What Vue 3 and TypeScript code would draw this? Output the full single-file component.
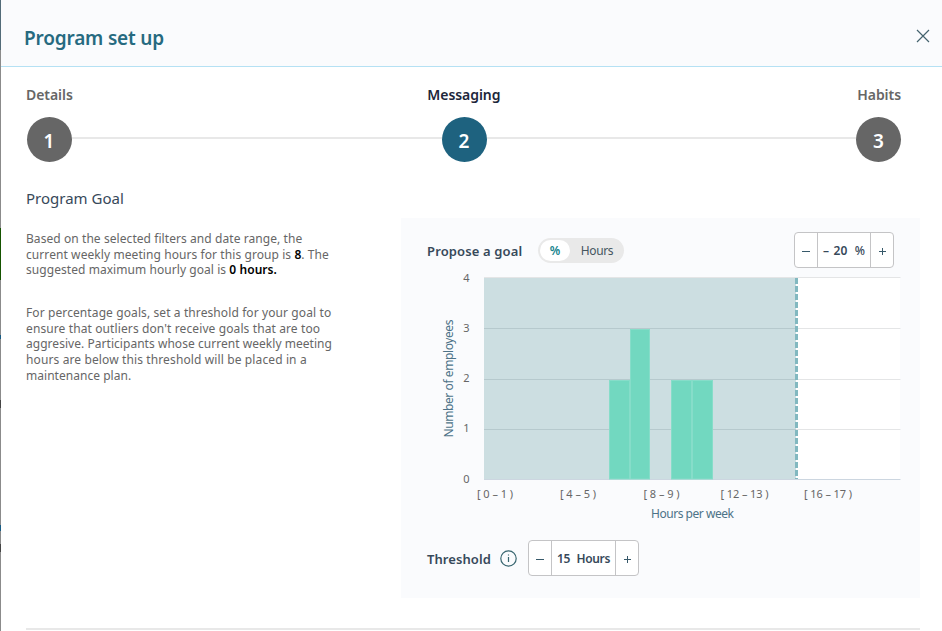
<script setup lang="ts">
import { ref } from 'vue'

interface Step { label: string; state: string }
const steps: Step[] = [
  { label: 'Details', state: 'idle first' },
  { label: 'Messaging', state: 'active' },
  { label: 'Habits', state: 'idle last' },
]

const goal = ref(20)
const threshold = ref(15)

const plot = { left: 83, width: 416 }
const binWidth = plot.width / 20
const grid = [
  { value: 4, y: 6.5, textY: 11 },
  { value: 3, y: 57.5, textY: 61 },
  { value: 2, y: 108.5, textY: 111 },
  { value: 1, y: 158.5, textY: 161 },
  { value: 0, y: 208.5, textY: 212 },
]
const bars = [
  { bin: 6, count: 2 },
  { bin: 7, count: 3 },
  { bin: 9, count: 2 },
  { bin: 10, count: 2 },
]
const ticks = [
  { x: 94, text: '[ 0 – 1 )', width: 36 },
  { x: 177, text: '[ 4 – 5 )', width: 36 },
  { x: 260.5, text: '[ 8 – 9 )', width: 36 },
  { x: 343.5, text: '[ 12 – 13 )', width: 48 },
  { x: 427, text: '[ 16 – 17 )', width: 48 },
]
const binEdge = (bin: number): number => plot.left + Math.round(bin * binWidth)
const barTop = (count: number): number => grid[4 - count].y + 0.5
</script>

<template>
  <div class="screen">
    <div class="backdrop">
      <i class="mark head"></i><i class="mark green"></i><i class="mark blue"></i><i class="mark dark"></i><i class="mark blue low"></i><i class="mark dark low"></i>
    </div>
    <section class="modal">
      <header class="header">
        <h1>Program set up</h1>
        <svg class="close" width="14" height="14" viewBox="0 0 14 14"><path d="M1 1 13 13M13 1 1 13" /></svg>
      </header>

      <div class="steps">
        <div v-for="(step, i) in steps" :key="step.label" class="step" :class="step.state">
          <span class="step-label">{{ step.label }}</span>
          <span class="dot">{{ i + 1 }}</span>
        </div>
      </div>

      <main class="content">
        <div class="copy">
          <h2>Program Goal</h2>
          <p class="intro">
            <span class="l1">Based on the selected filters and date range, the</span>
            <span class="l2">current weekly meeting hours for this group is <b>8</b>. The</span>
            <span class="l3">suggested maximum hourly goal is <b>0 hours.</b></span>
          </p>
          <p class="detail">
            <span class="l4">For percentage goals, set a threshold for your goal to</span>
            <span class="l5">ensure that outliers don't receive goals that are too</span>
            <span class="l6">aggresive. Participants whose current weekly meeting</span>
            <span class="l7">hours are below this threshold will be placed in a</span>
            <span class="l8">maintenance plan.</span>
          </p>
        </div>

        <div class="panel">
          <div class="goal-row">
            <span class="row-label propose">Propose a goal</span>
            <div class="toggle">
              <span class="option on">%</span>
              <span class="option hours">Hours</span>
            </div>
            <div class="stepper goal">
              <button @click="goal--"><svg width="8" height="7"><path d="M0 3.5H8" /></svg></button>
              <div class="value"><span class="amount">– {{ goal }}</span><span class="unit">%</span></div>
              <button class="plus" @click="goal++"><svg width="7" height="7"><path d="M0 3.5H7M3.5 0V7" /></svg></button>
            </div>
          </div>

          <svg class="chart" width="519" height="252" viewBox="0 0 519 252">
            <rect class="plot" :x="plot.left" y="6" :width="plot.width" height="203" />
            <g v-for="line in grid" :key="line.value">
              <line :class="line.value ? 'grid' : 'axis'" :x1="plot.left" :x2="plot.left + plot.width + 0.5" :y1="line.y" :y2="line.y" />
              <text class="tick" x="65.5" :y="line.textY" text-anchor="middle">{{ line.value }}</text>
            </g>
            <rect class="shade" :x="plot.left" y="7" :width="threshold * binWidth" height="201" />
            <rect
              v-for="bar in bars" :key="bar.bin" class="bar"
              :x="binEdge(bar.bin) + 0.5" :y="barTop(bar.count) + 0.5"
              :width="binEdge(bar.bin + 1) - binEdge(bar.bin) - 1" :height="207.5 - barTop(bar.count)"
            />
            <line class="limit" :x1="plot.left + threshold * binWidth + 0.5" :x2="plot.left + threshold * binWidth + 0.5" y1="7" y2="208" />
            <text
              v-for="tick in ticks" :key="tick.text" class="tick" :x="tick.x" y="227"
              text-anchor="middle" :textLength="tick.width"
            >{{ tick.text }}</text>
            <text class="title" x="291.5" y="247" text-anchor="middle" textLength="83">Hours per week</text>
            <text class="title" transform="translate(52 107.5) rotate(-90)" text-anchor="middle" textLength="118">Number of employees</text>
          </svg>

          <div class="threshold-row">
            <span class="row-label threshold">Threshold</span>
            <svg class="info" width="17" height="17" viewBox="0 0 17 17"><circle cx="8.5" cy="8.5" r="7.7" /><path d="M8.5 7V12M8.5 4.4V5.5" /></svg>
            <div class="stepper hours-stepper">
              <button @click="threshold--"><svg width="8" height="7"><path d="M0 3.5H8" /></svg></button>
              <div class="value"><span>{{ threshold }}</span><span>Hours</span></div>
              <button class="plus" @click="threshold++"><svg width="7" height="7"><path d="M0 3.5H7M3.5 0V7" /></svg></button>
            </div>
          </div>
        </div>
      </main>
      <hr class="rule" />
    </section>
  </div>
</template>

<style>
body { background: #fff; overflow: hidden; }
</style>

<style scoped>
* { box-sizing: border-box; }
.screen { width: 942px; height: 631px; display: flex; font-family: "Noto Sans", "Open Sans", sans-serif; color: #37495a; overflow: hidden; white-space: nowrap; }
.backdrop { width: 1px; background: #8b8b8b; display: flex; flex-direction: column; }
.mark { width: 1px; flex: none; }
.mark.head { height: 50px; background: #526b78; }
.mark.green { height: 52px; margin-top: 178px; background: #155400; }
.mark.blue { height: 4px; margin-top: 55px; background: #175b84; }
.mark.dark { height: 8px; margin-top: 61px; background: #444; }
.mark.blue.low { height: 6px; margin-top: 117px; }
.mark.dark.low { height: 8px; margin-top: 13px; }
.modal { flex: 1; background: #fff; }
.header { height: 67px; padding: 5px 12px 0 23px; display: flex; align-items: center; justify-content: space-between; background: #fafbfd; border-bottom: 1px solid #b5e1f4; }
h1 { margin: 4px 0 0; font-size: 19px; line-height: 26px; font-weight: 600; letter-spacing: -0.18px; color: #266a80; }
.close { fill: none; stroke: #44636e; stroke-width: 1.2; }
.steps { height: 95px; margin: 0 41px 0 25px; padding-top: 17px; display: flex; justify-content: space-between; background: linear-gradient(#e8e8e8, #e8e8e8) 40px 70px / 800px 2px no-repeat; }
.step { display: flex; flex-direction: column; align-items: center; }
.step.first { align-items: flex-start; }
.step.last { align-items: flex-end; }
.step-label { font-size: 14px; line-height: 22px; font-weight: 600; letter-spacing: -0.06px; color: #666; }
.active .step-label { padding-right: 1px; color: #20263a; }
.dot { width: 45px; height: 45px; margin-top: 11px; padding-right: 1px; border-radius: 50%; background: #666; color: #fff; font-size: 19px; line-height: 49px; text-align: center; font-weight: 600; }
.last .dot { padding-right: 0; }
.first .dot { margin-left: 1px; }
.active .dot { background: #1e627f; }
.content { display: flex; }
.copy { width: 400px; padding-left: 25px; }
h2 { margin: 25px 0 0; font-size: 15px; line-height: 22px; font-weight: 400; color: #37495a; }
p { margin: 0; font-size: 12px; line-height: 15.65px; color: #666; }
p span { display: block; width: max-content; }
p b { color: #000; font-weight: 600; }
.l1 { letter-spacing: 0.07px; }
.l2 { letter-spacing: 0.08px; }
.l3 { letter-spacing: 0.06px; }
.l4 { letter-spacing: 0.1px; }
.l5 { letter-spacing: 0.11px; }
.l6 { letter-spacing: 0.04px; }
.l7 { letter-spacing: 0.12px; }
.l8 { letter-spacing: 0.03px; }
.intro { margin-top: 22px; }
.detail { margin-top: 27px; }
.panel { width: 519px; height: 380px; margin-top: 56px; background: #fafbfd; }
.goal-row { height: 53px; padding: 14px 26px 0 26px; display: flex; align-items: flex-start; }
.row-label { font-size: 13px; line-height: 36px; font-weight: 600; color: #37495a; }
.propose { width: 111px; padding-top: 1px; letter-spacing: 0.13px; }
.toggle { width: 86px; height: 25px; margin-top: 6px; padding: 2px; border-radius: 13px; background: #e9e9e9; display: flex; }
.option { height: 21px; font-size: 12px; line-height: 21px; text-align: center; flex: 1; color: #45565f; }
.option.on { flex: none; width: 30px; border-radius: 11px; background: #fff; color: #15848d; font-weight: 600; }
.option.hours { padding-left: 2px; letter-spacing: -0.35px; }
.stepper { height: 36px; display: flex; border: 1px solid #c4c4c6; border-radius: 4px; background: #fff; overflow: hidden; }
.stepper button { width: 22px; flex: none; padding: 3px 0 0; border: 0; background: transparent; display: flex; align-items: center; justify-content: center; }
.stepper button.plus { padding-left: 1px; }
.stepper button svg { stroke: #37596a; stroke-width: 1; fill: none; }
.value { flex: 1; padding: 0 5px; display: flex; justify-content: space-between; border: solid #c4c4c6; border-width: 0 1px; font-size: 12px; line-height: 35px; font-weight: 600; color: #37495a; }
.value .amount { word-spacing: 1.5px; }
.value .unit { font-weight: 500; }
.stepper.goal { width: 100px; margin-left: auto; }
.hours-stepper { width: 111px; margin: 0 0 1px 11px; }
.hours-stepper .value { font-size: 12px; letter-spacing: -0.35px; }
.chart { display: block; overflow: visible; }
.plot { fill: #fff; }
.grid { stroke: #e4e5e6; }
.axis { stroke: #ccd6e0; }
.shade { fill: #015a68; fill-opacity: 0.2; }
.bar { fill: #72d8c0; stroke: #86ddc9; stroke-width: 1; }
.limit { stroke: #82b8c0; stroke-width: 3; stroke-dasharray: 6 2; }
.tick { font-size: 11px; fill: #666; }
.title { font-size: 12px; fill: #4d7388; }
.threshold-row { height: 54px; display: flex; align-items: center; padding: 16px 0 0 26px; }
.threshold { width: 73px; padding-top: 1px; letter-spacing: 0.08px; }
.info { fill: none; stroke: #37656f; stroke-width: 1.2; }
.rule { height: 2px; margin: 30px 22px 0 25px; border: 0; background: #e8e8e8; }
</style>
